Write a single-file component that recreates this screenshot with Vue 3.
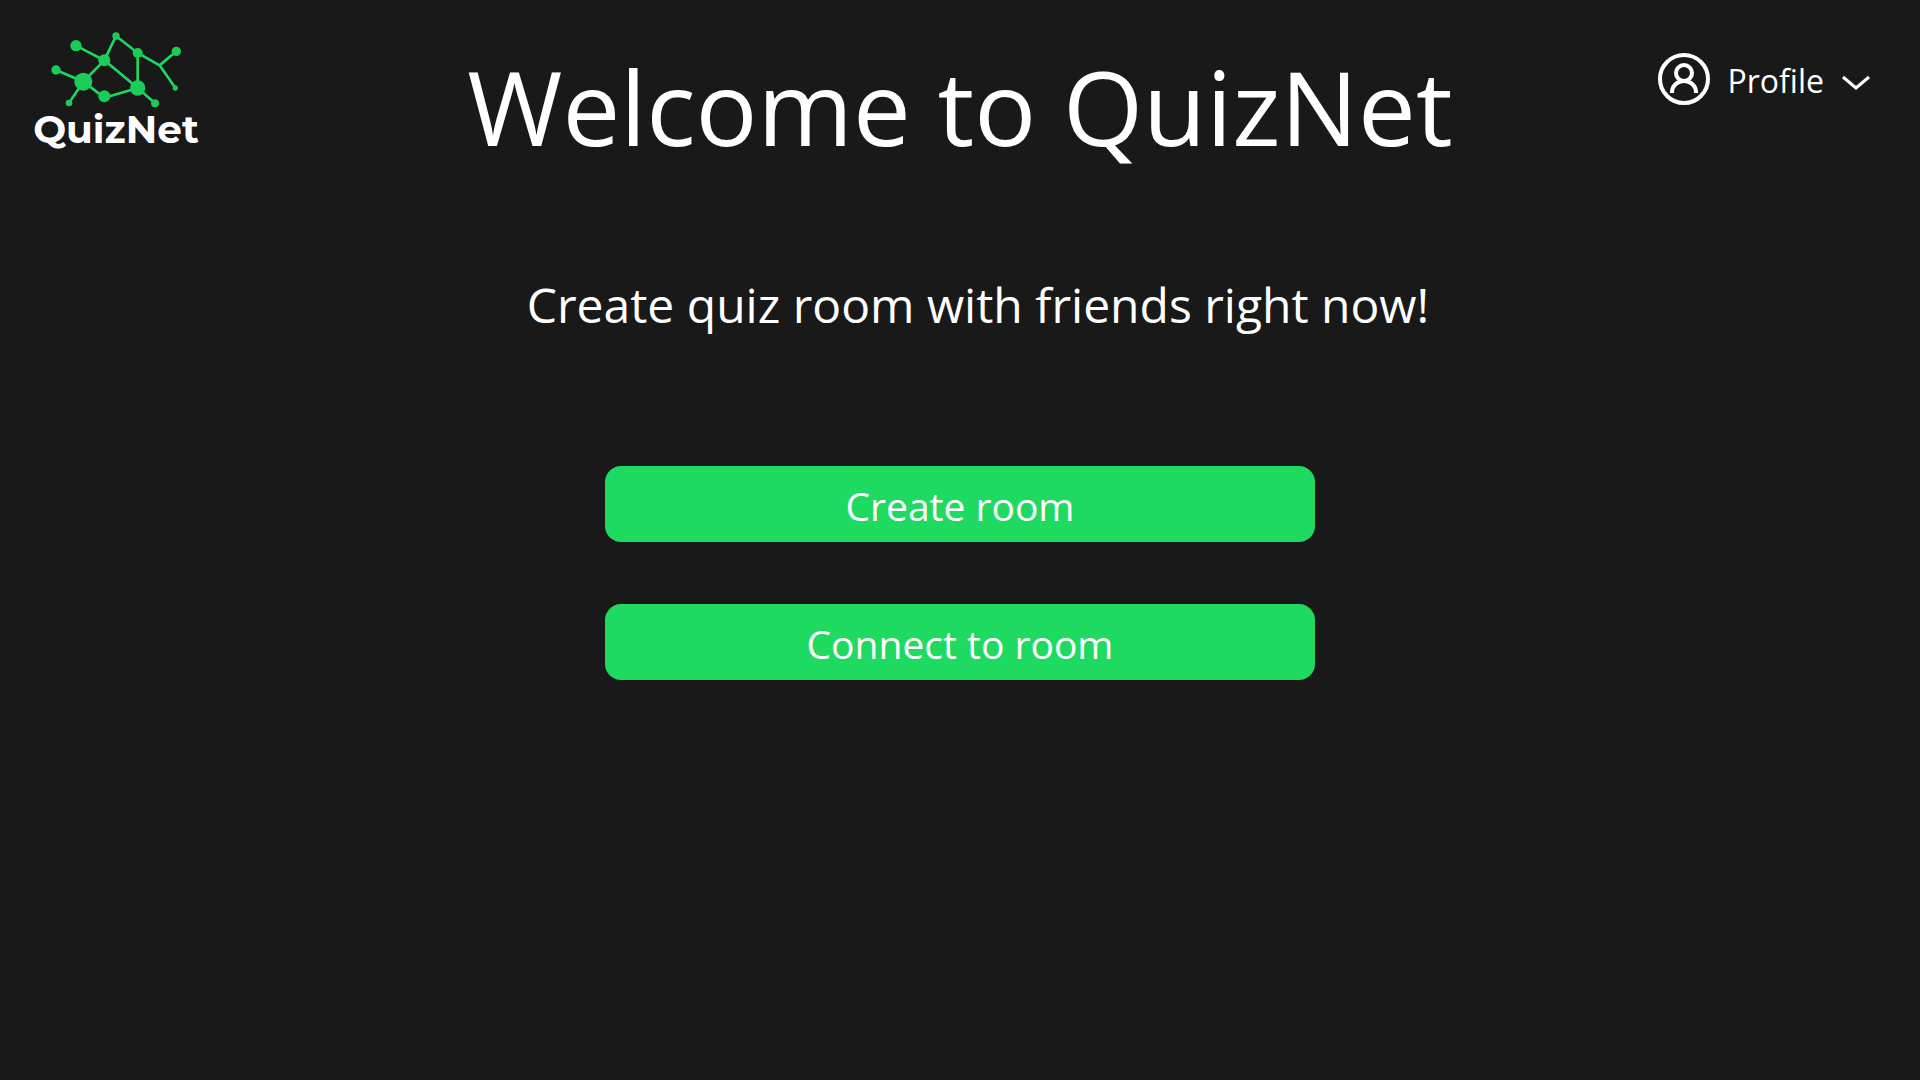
<script setup>
const nodes = [
  { x: 168, y: 77, r: 17 },
  { x: 288, y: 48, r: 11 },
  { x: 253, y: 121, r: 18 },
  { x: 353, y: 99, r: 15 },
  { x: 469, y: 94, r: 14 },
  { x: 108, y: 150, r: 14 },
  { x: 190, y: 185, r: 27 },
  { x: 353, y: 204, r: 23 },
  { x: 466, y: 204, r: 8 },
  { x: 253, y: 229, r: 18 },
  { x: 147, y: 249, r: 10 },
  { x: 405, y: 250, r: 12 },
]

const actions = ['Create room', 'Connect to room']
</script>

<template>
  <div class="page">
    <header class="header">
      <a class="logo" href="#">
        <svg class="logo-mark" viewBox="90 30 396 240" aria-hidden="true">
          <g fill="none" stroke="#1ed760" stroke-width="8">
            <path d="M168 77 253 121 288 48 353 99 419 136 469 94" />
            <path d="M419 136 466 204M353 99V204L405 250" />
            <path d="M253 121 353 204 253 233 190 185 253 121" />
            <path d="M108 150 190 185 147 249" />
          </g>
          <circle v-for="(n, i) in nodes" :key="i" :cx="n.x" :cy="n.y" :r="n.r" fill="#1bcc58" />
        </svg>
        <span class="logo-name">QuizNet</span>
      </a>
      <h1 class="title">Welcome to QuizNet</h1>
      <button class="profile" type="button">
        <svg class="avatar" viewBox="0 0 52 52" fill="none" stroke="#fff" stroke-width="4" aria-hidden="true">
          <circle cx="26" cy="26" r="24" />
          <circle cx="26" cy="20" r="8" />
          <path d="M14 40V39A12 11 0 0 1 38 39V40" />
        </svg>
        <span class="profile-label">Profile</span>
        <svg class="chevron" viewBox="0 0 28 16" fill="none" stroke="#fff" stroke-width="3" aria-hidden="true">
          <path d="M1 2 14 13 27 2" />
        </svg>
      </button>
    </header>
    <main class="main">
      <p class="subtitle">Create quiz room with friends right now!</p>
      <div class="actions">
        <button v-for="label in actions" :key="label" class="action" type="button">{{ label }}</button>
      </div>
    </main>
  </div>
</template>

<style>
body {
  margin: 0;
  background: #191919;
}
</style>

<style scoped>
.page {
  min-height: 100vh;
  box-sizing: border-box;
  background: #191919;
  color: #fff;
  font-family: "Open Sans", "Noto Sans", sans-serif;
}

.header {
  display: grid;
  grid-template-columns: 1fr auto 1fr;
  align-items: start;
  padding: 30px 50px 0 34px;
}

.logo {
  display: flex;
  flex-direction: column;
  align-items: center;
  justify-self: start;
  width: 164px;
  color: #fff;
  text-decoration: none;
}

.logo-mark {
  width: 132px;
  height: 80px;
}

.logo-name {
  font-family: Montserrat, Inter, sans-serif;
  font-size: 39px;
  font-weight: 700;
  line-height: 38px;
}

.title {
  margin: 16px 0 0 16px;
  font-size: 103px;
  font-weight: 400;
  line-height: 120px;
  white-space: nowrap;
}

.profile {
  display: flex;
  align-items: center;
  justify-self: end;
  gap: 18px;
  margin-top: 21px;
  padding: 0;
  border: 0;
  background: none;
  color: inherit;
  font: inherit;
  font-size: 32px;
  line-height: 52px;
  cursor: pointer;
}

.profile-label {
  padding-top: 4px;
}

.avatar {
  width: 52px;
  height: 52px;
}

.chevron {
  width: 28px;
  height: 16px;
  margin-top: 8px;
}

.main {
  display: flex;
  flex-direction: column;
  align-items: center;
  padding-top: 109px;
}

.subtitle {
  margin: 0;
  padding-left: 36px;
  font-size: 48px;
  line-height: 60px;
}

.actions {
  display: flex;
  flex-direction: column;
  gap: 62px;
  width: 37%;
  margin-top: 131px;
}

.action {
  height: 76px;
  padding: 4px 0 0;
  border: 0;
  border-radius: 16px;
  background: #1fda61;
  color: #fff;
  font: inherit;
  font-size: 39px;
  line-height: 72px;
  cursor: pointer;
}
</style>
